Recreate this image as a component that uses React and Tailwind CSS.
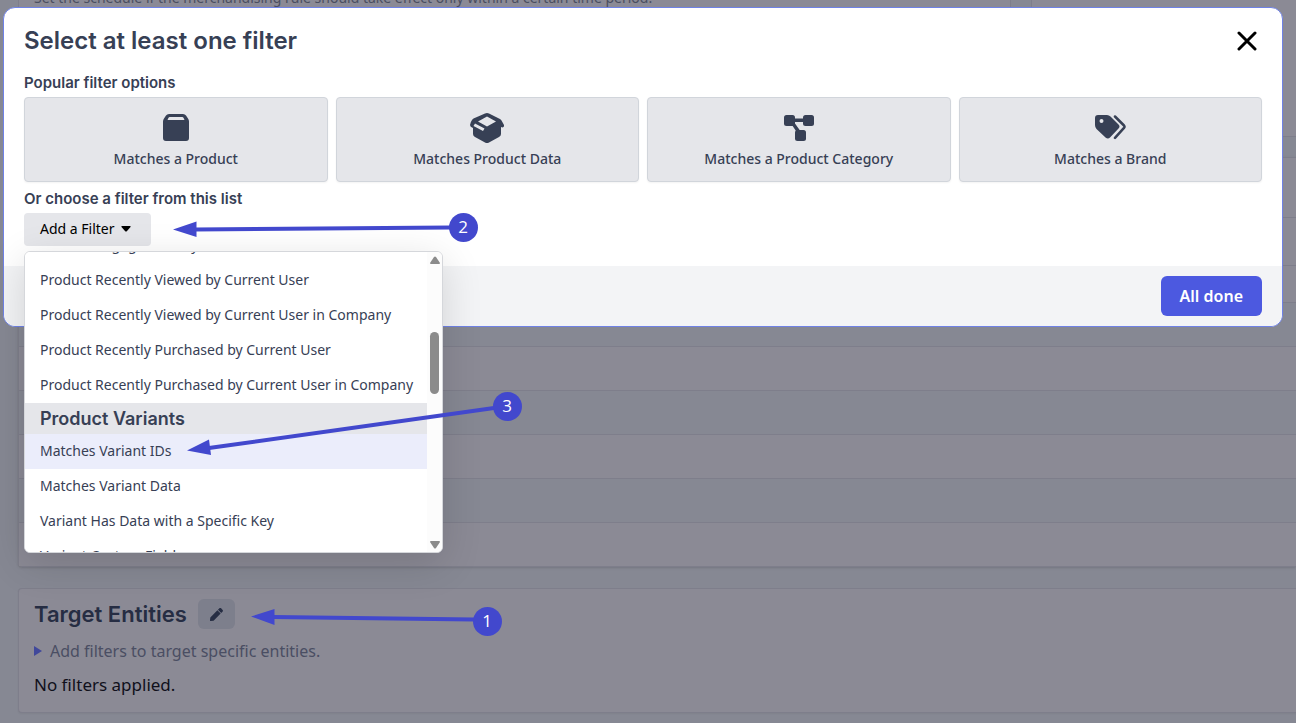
import { FaPen } from 'react-icons/fa'

const POPULAR_FILTERS = [
  { label: 'Matches a Product', Icon: BoxIcon },
  { label: 'Matches Product Data', Icon: OpenBoxIcon },
  { label: 'Matches a Product Category', Icon: CategoryIcon },
  { label: 'Matches a Brand', Icon: TagsIcon },
]

const RECENT_FILTERS = [
  'Product Recently Viewed by Current User',
  'Product Recently Viewed by Current User in Company',
  'Product Recently Purchased by Current User',
  'Product Recently Purchased by Current User in Company',
]

const VARIANT_FILTERS = ['Matches Variant IDs', 'Matches Variant Data', 'Variant Has Data with a Specific Key']

// striped table rows behind the dialog
const ROWS = [
  'h-12 bg-[#8b8a95]',
  'h-[37px] bg-[#8b8a95]',
  'h-11 bg-[#868893]',
  'h-11 bg-[#8b8a95]',
  'h-11 bg-[#868893]',
  'h-11 bg-[#8b8a95]',
  'h-11 bg-[#868893]',
  'h-11 bg-[#8b8a95]',
]

export default function App() {
  return (
    <div className="relative h-screen overflow-hidden bg-[#868893] font-['Noto_Sans','Open_Sans',sans-serif]">
      <Backdrop />
      <FilterDialog />
      <Annotations />
    </div>
  )
}

function Backdrop() {
  return (
    <main className="pl-[18px]">
      <div className="flex h-[137px] gap-5">
        <div className="w-[993px] shrink-0 border-x border-b border-[#7e7e8b] bg-[#8b8a95] px-[15px]">
          <p className="-mt-3 text-sm leading-5 text-[#4a4e60]">
            Set the schedule if the merchandising rule should take effect only within a certain time period.
          </p>
        </div>
        <div className="flex-1 border-b border-l border-[#7e7e8b] bg-[#8b8a95]" />
      </div>

      <section className="mt-5 rounded-l border border-r-0 border-[#7e7e8b] bg-[#8b8a95] pt-[59px] shadow">
        {ROWS.map((row, i) => (
          <div key={i} className={`border-t border-[#7e7e8b] ${row}`} />
        ))}
      </section>

      <section className="mt-[21px] h-[125px] rounded-l border border-r-0 border-[#7e7e8b] bg-[#8b8a95] px-[15px] pt-[9px] shadow-xs">
        <div className="flex items-center gap-[11px]">
          <h2 className="font-['Inter','Open_Sans',sans-serif] text-[22px] leading-8 font-semibold text-[#262d43]">Target Entities</h2>
          <button type="button" aria-label="Edit target entities" className="flex h-[30px] w-[37px] items-center justify-center rounded-md bg-[#7d7f8c] text-[#262d43]">
            <FaPen className="size-[13px]" />
          </button>
        </div>
        <div className="mt-[9px] flex items-center gap-2 text-base leading-6 text-[#4a4e63]">
          <svg viewBox="0 0 8 10" className="h-2.5 w-2 fill-[#40489b]"><path d="M0 0l8 5-8 5z" /></svg>
          Add filters to target specific entities.
        </div>
        <p className="mt-2.5 text-[17px] leading-6 text-[#10101b]">No filters applied.</p>
      </section>
    </main>
  )
}

function FilterDialog() {
  return (
    <div role="dialog" aria-labelledby="dialog-title" className="absolute top-[7px] right-[13px] left-[3px] rounded-xl border border-[#6f82e6] bg-white text-[#374055]">
      <div className="px-5 pt-[15px] pb-5">
        <header className="flex items-center justify-between">
          <h1 id="dialog-title" className="font-['Inter','Open_Sans',sans-serif] text-2xl leading-9 font-semibold">Select at least one filter</h1>
          <button type="button" aria-label="Close" className="flex h-8 w-[30px] items-center justify-center text-black">
            <svg viewBox="0 0 20 20" className="size-5 stroke-current stroke-3" strokeLinecap="round"><path d="M2 2l16 16M18 2L2 18" /></svg>
          </button>
        </header>

        <h2 className="mt-3.5 font-['Inter','Open_Sans',sans-serif] text-[15px] leading-5 font-semibold">Popular filter options</h2>
        <div className="mt-1 grid grid-cols-4 gap-2">
          {POPULAR_FILTERS.map(({ label, Icon }) => (
            <button key={label} type="button" className="flex h-[85px] flex-col items-center rounded border border-[#d1d5db] bg-[#e5e6ea] pt-3.5 shadow-xs">
              <Icon />
              <span className="mt-[5px] text-sm leading-5 font-medium">{label}</span>
            </button>
          ))}
        </div>

        <h2 className="mt-[7px] font-['Inter','Open_Sans',sans-serif] text-[15px] leading-5 font-semibold">Or choose a filter from this list</h2>
        <div className="relative mt-1 flex">
          <button type="button" className="flex h-[33px] w-[127px] items-center justify-between rounded bg-[#e5e6ea] pr-5 pb-px pl-4 text-sm text-black">
            Add a Filter
            <svg viewBox="0 0 10 6" className="h-1.5 w-2.5 fill-current"><path d="M1 0h8q1 0 .5 1L6 5q-1 1-2 0L.5 1Q0 0 1 0z" /></svg>
          </button>
          <FilterMenu />
        </div>
      </div>

      <footer className="flex justify-end rounded-b-xl bg-[#f3f4f6] px-5 py-2.5">
        <button type="button" className="h-10 rounded-md bg-[#4c59e0] px-[19px] text-base font-semibold text-white">All done</button>
      </footer>
    </div>
  )
}

function FilterMenu() {
  return (
    <div className="absolute top-[38px] left-0 flex h-[302px] w-[419px] overflow-hidden rounded-md border border-[#d5d7db] bg-white shadow-[0_10px_40px_rgba(0,0,0,0.14)]">
      <div className="flex flex-1 flex-col overflow-hidden text-sm whitespace-nowrap">
        <div className="-mt-6 flex flex-col">
          <MenuItem label="Product Engagement by Current User" />
          {RECENT_FILTERS.map(label => <MenuItem key={label} label={label} />)}
          <h3 className="h-[31px] bg-[#e5e6ea] px-[15px] font-['Inter','Open_Sans',sans-serif] text-lg leading-[31px] font-semibold">Product Variants</h3>
          {VARIANT_FILTERS.map((label, i) => <MenuItem key={label} label={label} active={i === 0} />)}
          <MenuItem label="Variant Custom Field" />
        </div>
      </div>
      <div className="flex w-[15px] flex-col items-center bg-[#fcfcfc] pt-1 pb-[3px]">
        <svg viewBox="0 0 10 8" className="h-2 w-2.5 fill-[#8b8b8b]"><path d="M4 1q1-1 2 0l4 6q0 1-1 1H1q-1 0-1-1z" /></svg>
        <div className="mt-[68px] h-[62px] w-[9px] rounded-full bg-[#8b8b8b]" />
        <svg viewBox="0 0 10 8" className="mt-auto h-2 w-2.5 rotate-180 fill-[#8b8b8b]"><path d="M4 1q1-1 2 0l4 6q0 1-1 1H1q-1 0-1-1z" /></svg>
      </div>
    </div>
  )
}

function MenuItem({ label, active }) {
  return (
    <button type="button" className={`h-[35px] shrink-0 px-[15px] pb-px text-left ${active ? 'bg-[#ebedfb]' : 'bg-white'}`}>
      {label}
    </button>
  )
}

// numbered callouts over the page
function Annotations() {
  return (
    <svg width="1296" height="723" className="pointer-events-none absolute top-0 left-0 fill-[#4248cd] stroke-[#4248cd] font-['Open_Sans',sans-serif]">
      <g strokeWidth="4">
        <path d="M195 229.500L450 227.500M209 448L494 408M273 617L474 619.500" />
      </g>
      <g stroke="none">
        <path d="M173 229.500L196.500 221.500V237zM187 450.500L209 439.500L211 455zM251 616.500L274.500 609V625z" />
        <circle cx="463.500" cy="227.500" r="14.500" />
        <circle cx="507.500" cy="406.500" r="14.500" />
        <circle cx="487.500" cy="621.500" r="14.500" />
        <g className="fill-white text-[17px]" textAnchor="middle">
          <text x="463" y="233">2</text>
          <text x="507" y="412">3</text>
          <text x="487" y="627">1</text>
        </g>
      </g>
    </svg>
  )
}

function BoxIcon() {
  return (
    <svg viewBox="0 0 26 28" className="my-0.5 h-7 w-[26px] fill-current">
      <path fillRule="evenodd" d="M6 0h14q2 0 3 1.500l2 3q1 1.500 1 3V24q0 3-3 3H3q-3 0-3-3V7.500Q0 6 1 4.500l2-3Q4 0 6 0zM6.500 3Q5.500 3 4.500 6h17Q20.500 3 19.500 3z" />
    </svg>
  )
}

function OpenBoxIcon() {
  return (
    <svg viewBox="0 0 34 32" className="h-8 w-[34px] fill-current">
      <path fillRule="evenodd" d="M15 1.500q2-1 4 0L30 7q1 .5 1.500 1.500l2.500 4.500q.5 2-1.500 2.500L31 15v7q0 2-2 3l-10 5.500q-2 1-4 0L5 25q-2-1-2-3v-6q-3-1-3-3 .5-3 2-5 .5-1 1.500-1.500zM17 4.500L8 9.500l9 5 9-5zM5 11.500l-1.500 2.500 9.500 5 1.500-2.500z" />
    </svg>
  )
}

function CategoryIcon() {
  return (
    <svg viewBox="0 0 30 26" className="my-[3px] h-[26px] w-[30px] fill-current">
      <rect width="11" height="11" rx="2.500" />
      <rect x="19" width="11" height="11" rx="2.500" />
      <rect x="11" y="15" width="11" height="11" rx="2.500" />
      <path d="M9 3.500h12v3.500H9zM8 10l3-1.500 5 7-3 2z" />
    </svg>
  )
}

function TagsIcon() {
  return (
    <svg viewBox="-1 0 32 26" className="my-[3px] h-[26px] w-8 fill-current">
      <path fillRule="evenodd" d="M3 0h9q2 0 3.500 1.500l8 8q2 2 0 4L15 22.500q-2 2-4.500 0L1.500 14Q0 12.500 0 10V3Q0 0 3 0zM6.500 4a2 2 0 100 4 2 2 0 000-4z" />
      <path className="fill-none stroke-current" strokeWidth="2.500" strokeLinecap="round" strokeLinejoin="round" d="M20 1.500l9 9q1 1.200 0 2.400l-9 10" />
    </svg>
  )
}
